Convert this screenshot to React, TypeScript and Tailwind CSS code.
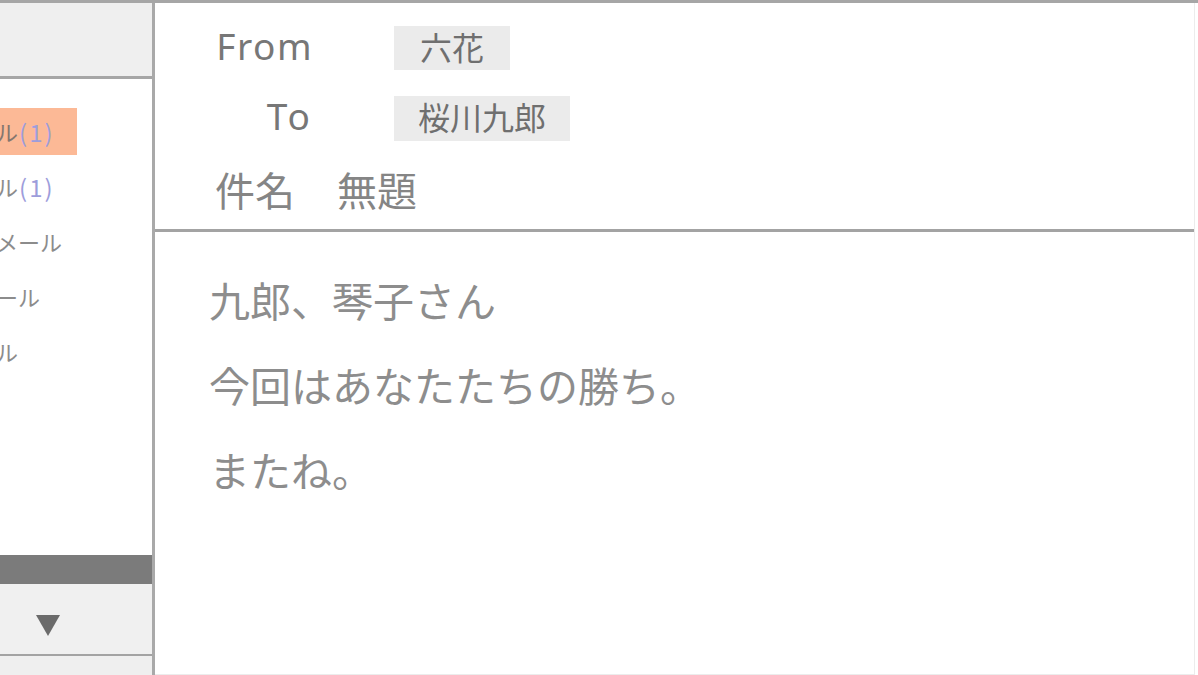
export default function App() {
  const items: { pre: string; count?: string; active?: boolean }[] = [
    { pre: "受信メール", count: "(1)", active: true },
    { pre: "未読メール", count: "(1)" },
    { pre: "送信済みメール" },
    { pre: "未送信メール" },
    { pre: "保存メール" },
  ];
  return (
    <div className="w-[1198px] h-[675px] overflow-hidden bg-white border-t-[3px] border-[#a6a6a6] flex font-['Noto_Sans_CJK_JP','Noto_Sans',sans-serif]">
      <aside className="w-[155px] h-full shrink-0 flex flex-col border-r-[3px] border-[#a9a9a9]">
        <div className="h-[76px] bg-[#efefef] border-b-[3px] border-[#a6a6a6]" />
        <div className="flex-1 bg-white overflow-hidden pt-[29px]">
          <ul className="-ml-[92px] flex flex-col gap-[8px]">
            {items.map((it) => (
              <li
                key={it.pre}
                className={`h-[47px] w-[169px] flex items-center text-[22px] whitespace-nowrap ${
                  it.active ? "bg-[#fcb996] text-[#85776f]" : "text-[#8c8c8c]"
                }`}
              >
                <span>{it.pre}</span>
                {it.count && (
                  <span className="text-[#9d9ddb] text-[24px] tracking-[2px] ml-[1px]">{it.count}</span>
                )}
              </li>
            ))}
          </ul>
        </div>
        <div className="h-[29px] bg-[#7b7b7b]" />
        <div className="h-[72px] bg-[#f0f0f0] border-b-[2px] border-[#a3a3a3] flex items-start pl-[36px] pt-[31px]">
          <svg width="24" height="21" viewBox="0 0 24 21">
            <polygon points="0,0 24,0 12,21" fill="#6b6b6b" />
          </svg>
        </div>
        <div className="h-[19px] bg-[#efefef]" />
      </aside>
      <main className="flex-1 flex flex-col border-r border-[#ececec] mr-[3px] border-b">
        <header className="h-[229px] shrink-0 border-b-[3px] border-[#a3a3a3] pt-[23px]">
          <div className="flex items-center h-[44px]">
            <div className="w-[158px] pb-[6px] text-right text-[37px] leading-none text-[#777777] font-['Noto_Sans',sans-serif] tracking-[1.5px]">
              From
            </div>
            <div className="ml-[81px] h-[44px] px-[26px] pb-[5px] bg-[#ebebeb] flex items-center text-[32px] text-[#6f6f6f]">
              六花
            </div>
          </div>
          <div className="flex items-center h-[45px] mt-[26px]">
            <div className="w-[158px] pb-[6px] text-right text-[37px] leading-none text-[#777777] font-['Noto_Sans',sans-serif] tracking-[3px]">
              To
            </div>
            <div className="ml-[81px] h-[45px] px-[24px] pb-[5px] bg-[#ebebeb] flex items-center text-[32px] text-[#6f6f6f]">
              桜川九郎
            </div>
          </div>
          <div className="flex items-center h-[48px] mt-[25px] pl-[60px] pb-[2px] text-[40px] text-[#858585]">
            <span>件名</span>
            <span className="ml-[42px]">無題</span>
          </div>
        </header>
        <section className="flex-1 pt-[25px] pl-[54px] text-[41px] leading-[85px] text-[#8d8d8d]">
          <p>九郎、琴子さん</p>
          <p>今回はあなたたちの勝ち。</p>
          <p>またね。</p>
        </section>
      </main>
    </div>
  );
}
